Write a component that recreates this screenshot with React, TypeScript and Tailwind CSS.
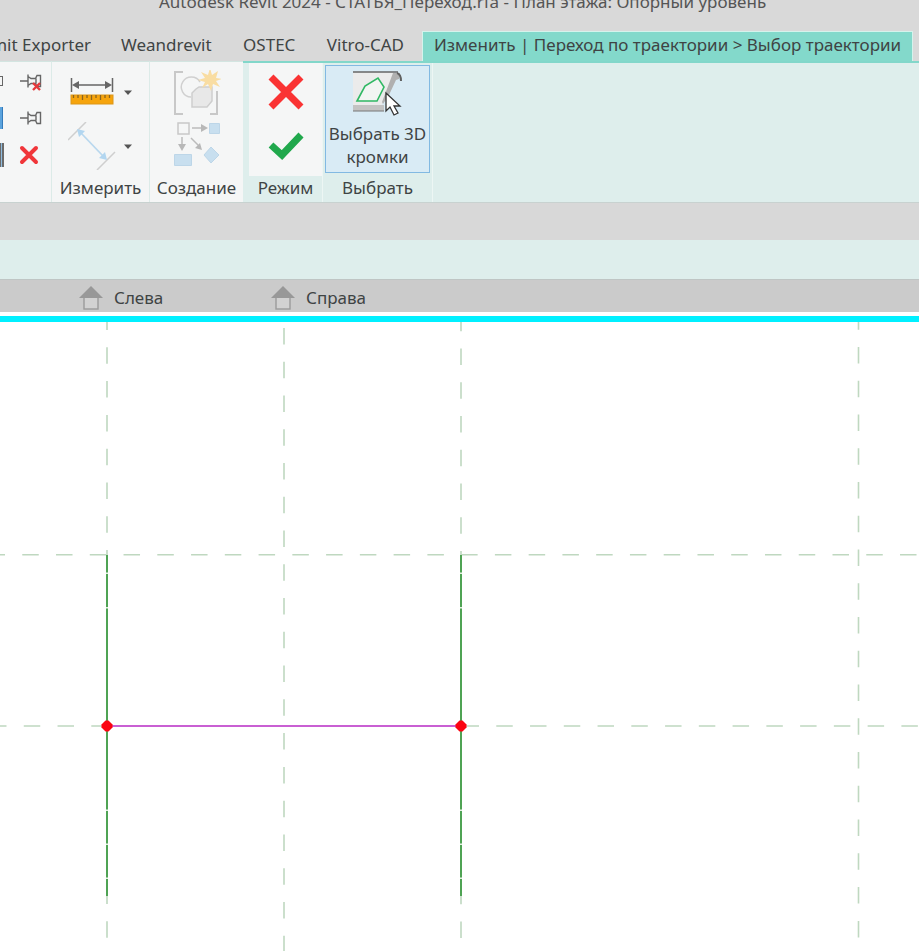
const TABS = ["Weandrevit", "OSTEC", "Vitro-CAD"];

// Reference planes: dashes repeat every 33.76 units
const PLANES = [
  { x1: 107, y1: 313.6, x2: 107, y2: 555 },
  { x1: 107, y1: 887.5, x2: 107, y2: 2000 },
  { x1: 284, y1: 328, x2: 284, y2: 2000 },
  { x1: 461, y1: 314.8, x2: 461, y2: 555 },
  { x1: 461, y1: 887.7, x2: 461, y2: 2000 },
  { x1: 858.5, y1: 313.2, x2: 858.5, y2: 2000 },
  { x1: -11.5, y1: 554.8, x2: 3000, y2: 554.8 },
  { x1: -10, y1: 726, x2: 107, y2: 726 },
  { x1: 462.5, y1: 726, x2: 3000, y2: 726 },
];

const PROFILE_X = [107, 461];
const PROFILE_BREAKS = [573, 607.5, 810, 844, 878];

function HouseIcon() {
  return (
    <svg width="24" height="24" viewBox="0 0 24 24" aria-hidden="true">
      <rect x="5" y="11" width="14" height="12" fill="#d2d2d2" stroke="#9b9b9b" strokeWidth="1.4" />
      <path d="M12 0 24 12H0Z" fill="#989898" />
    </svg>
  );
}

function PinIcon({ unpin = false }: { unpin?: boolean }) {
  return (
    <svg width="24" height="20" viewBox="0 0 24 20" fill="none" stroke="#666" strokeWidth="1.4" aria-hidden="true">
      <path d="M1 10h8M9 3.500v13M9 5.500l3 2h4.500l1.500-3h3.500v11H18l-1.500-3H12l-3 2M17 7.500v5" />
      {unpin && <path d="m14 12 7 7m0-7-7 7" stroke="#e5393c" strokeWidth="2.400" />}
    </svg>
  );
}

function DeleteIcon() {
  return (
    <svg width="20" height="20" viewBox="0 0 20 20" aria-hidden="true">
      <path d="m3 3 14 14m0-14L3 17" stroke="#f0363a" strokeWidth="4" strokeLinecap="round" />
    </svg>
  );
}

function MeasureIcon() {
  return (
    <svg width="44" height="28" viewBox="0 0 44 28" aria-hidden="true">
      <path d="M1.500 0v14M42.500 0v14M6 7h32" stroke="#666" strokeWidth="1.500" />
      <path d="M2 7l7-4v8zM42 7l-7-4v8z" fill="#666" />
      <rect x="1" y="17" width="42" height="9" fill="#f6a40c" stroke="#dc9618" />
      <path d="M3.500 17v3M8 17v3M12.500 17v5M17 17v3M21.500 17v5M26 17v3M30.500 17v5M35 17v3M39.500 17v3" stroke="#8a6420" strokeWidth="1.300" />
    </svg>
  );
}

function DimensionIcon() {
  return (
    <svg width="48" height="48" viewBox="0 0 48 48" aria-hidden="true">
      <path d="M0 18 18 0M29 48 47 30" stroke="#cfcfcf" strokeWidth="1.500" />
      <path d="m13 11 22 23" stroke="#b9d8ee" strokeWidth="1.800" />
      <path d="m9 7 8 2-6 6zM39 38l-8-2 6-6z" fill="#b2d6f0" />
    </svg>
  );
}

function GroupIcon() {
  return (
    <svg width="48" height="48" viewBox="0 0 48 48" fill="none" aria-hidden="true">
      <path d="M10 2H2v42h8M37 44h7V21" stroke="#c8c8c8" strokeWidth="2" />
      <path d="M18 27A10 10 0 1 1 27 12" stroke="#d0d0d0" strokeWidth="1.500" />
      <path d="m23 19 3-2h13v14l-5 6H19V23Z" fill="#e8e8e8" stroke="#cecece" strokeWidth="1.500" />
      <path d="m37-2 2 7 6-4-2 7 6 1-6 2 4 6-7-3-2 7-3-7-6 4 3-6-7-2 7-2-4-6 7 3z" fill="#f9dda2" />
    </svg>
  );
}

function CreateSimilarIcon() {
  return (
    <svg width="46" height="44" viewBox="0 0 46 44" fill="none" aria-hidden="true">
      <path d="M18 6h9M8 15v9M17 16l8 8" stroke="#bcbcbc" strokeWidth="1.500" />
      <path d="m27 2 7 4-7 4zM4 22h8l-4 7zM28 28l-2-7-5 5z" fill="#b8b8b8" />
      <rect x="4" y="1" width="11" height="11" stroke="#c8c8c8" strokeWidth="1.500" />
      <path d="M35.500 1.500h10v10h-10zM.500 32.500h17v11h-17zM37 25l8 8-8 8-7-8z" fill="#c8dfef" stroke="#bdd6e8" />
    </svg>
  );
}

function PickEdgesIcon() {
  return (
    <svg width="52" height="48" viewBox="0 0 52 48" aria-hidden="true">
      <path d="M1 2h41L30 35H1z" fill="#ebebeb" />
      <path d="M1 35h31v6H1z" fill="#c3c3c3" />
      <path d="M41 3h7l-1 6-3 1-7 15-6 9-1-2z" fill="#b0b0b0" />
      <path d="M1 2h45" stroke="#666" strokeWidth="1.500" />
      <path d="M45 3c3 1 4 4 4 8" fill="none" stroke="#606060" strokeWidth="2" />
      <path d="M1 41h31" stroke="#777" />
      <path d="m5 31 8-15 13-8 6 9-7 14z" fill="#f2f5f3" stroke="#31b864" strokeWidth="1.600" />
      <path d="M34 23v18l4-4 4 8 4-2-4-7h6z" fill="#fff" stroke="#333" strokeWidth="1.300" />
    </svg>
  );
}

function MenuArrow() {
  return (
    <svg width="8" height="5" viewBox="0 0 8 5" aria-hidden="true">
      <path d="M0 .5h8L4 5z" fill="#555" />
    </svg>
  );
}

function Ribbon() {
  return (
    <div className="flex h-[142px] border-b border-[#c8d2d0] bg-[#deeeec]">
      <div className="flex w-[52px] shrink-0 flex-col border-t border-r border-t-[#d3e5e1] border-r-[#dcebe8] bg-[#f5f6f6]">
        <div className="flex h-[38px] items-center justify-between pr-2">
          <span className="h-2.5 w-[3px] border border-l-0 border-[#666]" />
          <button type="button" aria-label="Открепить"><PinIcon unpin /></button>
        </div>
        <div className="flex h-9 items-center justify-between pr-2">
          <span className="h-[22px] w-[3px] border-r border-[#347bbc] bg-[#5ba3dd]" />
          <button type="button" aria-label="Закрепить"><PinIcon /></button>
        </div>
        <div className="flex h-[38px] items-center justify-between pr-3">
          <span className="h-6 w-1 border-r-2 border-l border-[#6b6b6b] bg-[#8ebce0]" />
          <button type="button" aria-label="Удалить"><DeleteIcon /></button>
        </div>
      </div>

      <section className="flex w-[98px] shrink-0 flex-col border-t border-r border-t-[#d3e5e1] border-r-[#dcebe8] bg-[#f5f6f6]">
        <div className="flex grow flex-col gap-4 pt-4 pl-4">
          <button type="button" aria-label="Измерить расстояние" className="flex items-center gap-2.5 pl-0.5">
            <MeasureIcon />
            <MenuArrow />
          </button>
          <button type="button" aria-label="Размер" className="flex items-center gap-2">
            <DimensionIcon />
            <MenuArrow />
          </button>
        </div>
        <h2 className="pb-0.5 text-center text-[17px] leading-6">Измерить</h2>
      </section>

      <section className="flex w-[93px] shrink-0 flex-col border-t border-[#d3e5e1] bg-[#f5f6f6]">
        <div className="flex grow flex-col items-center gap-1 pt-2">
          <button type="button" aria-label="Создать группу"><GroupIcon /></button>
          <button type="button" aria-label="Создать подобный"><CreateSimilarIcon /></button>
        </div>
        <h2 className="pb-0.5 text-center text-[17px] leading-6">Создание</h2>
      </section>

      <div className="flex grow border-t-2 border-[#82d7ca] pl-1.5">
        <section className="flex w-[74px] shrink-0 flex-col border-r border-[#edf6f4]">
          <div className="flex grow flex-col items-center gap-5 bg-[#f5f6f6] pt-2.5">
            <button type="button" aria-label="Отменить">
              <svg width="38" height="38" viewBox="0 0 38 38" aria-hidden="true">
                <path d="m4 4 30 30m0-30L4 34" stroke="#fa3333" strokeWidth="7" />
              </svg>
            </button>
            <button type="button" aria-label="Принять">
              <svg width="38" height="30" viewBox="0 0 38 30" aria-hidden="true">
                <path d="m4 14 11 10L34 4" fill="none" stroke="#20a84c" strokeWidth="7" />
              </svg>
            </button>
          </div>
          <h2 className="pb-0.5 text-center text-[17px] leading-6">Режим</h2>
        </section>

        <section className="flex w-[110px] shrink-0 flex-col border-r border-[#edf6f4] px-0.5 pt-0.5">
          <button
            type="button"
            className="flex h-[108px] flex-col items-center border border-[#82b9e2] bg-[#d9ebf5] pt-1 text-[17px] leading-[23px]"
          >
            <PickEdgesIcon />
            <span className="pt-1 whitespace-nowrap">Выбрать 3D</span>
            <span>кромки</span>
          </button>
          <h2 className="mt-auto pb-0.5 text-center text-[17px] leading-6">Выбрать</h2>
        </section>
      </div>
    </div>
  );
}

function DrawingArea() {
  return (
    <svg
      className="block h-[629px] w-full"
      viewBox="0 322 919 629"
      preserveAspectRatio="xMinYMin slice"
      role="img"
      aria-label="План этажа"
    >
      <g stroke="#bfd8c0" strokeWidth="1.600" strokeDasharray="16.500 17.260">
        {PLANES.map((p, i) => (
          <line key={i} {...p} />
        ))}
      </g>
      {PROFILE_X.map((x) => (
        <g key={x}>
          <line x1={x} y1="555" x2={x} y2="896" stroke="#4fa354" strokeWidth="2" />
          {PROFILE_BREAKS.map((y) => (
            <rect key={y} x={x - 1} y={y - 0.5} width="2" height="1.500" fill="#e6f2e4" />
          ))}
        </g>
      ))}
      <line x1="107" y1="726" x2="461" y2="726" stroke="#c95fd3" strokeWidth="2" />
      {PROFILE_X.map((x) => (
        <path key={x} d={`M${x - 1.5} 720.500h3l4 4v3l-4 4h-3l-4-4v-3z`} fill="#fb0411" />
      ))}
    </svg>
  );
}

export default function App() {
  return (
    <div className="overflow-hidden bg-white font-['Noto_Sans',sans-serif] text-[#3f4444]">
      <header className="bg-[#d9d9d9]">
        <div className="flex h-[31px] items-start overflow-hidden pl-[159px]">
          <h1 className="-mt-2.5 text-[17px] leading-6 whitespace-nowrap text-[#555]">
            Autodesk Revit 2024 - СТАТЬЯ_Переход.rfa - План этажа: Опорный уровень
          </h1>
        </div>
        <nav className="flex h-[30px] items-stretch text-[17px] leading-7 whitespace-nowrap">
          <button type="button" className="flex w-[91px] shrink-0 justify-end overflow-hidden">
            Summit Exporter
          </button>
          <div className="flex grow items-start justify-between pr-[18px] pl-[30px]">
            {TABS.map((tab) => (
              <button key={tab} type="button">{tab}</button>
            ))}
          </div>
          <button
            type="button"
            className="mr-1.5 w-[491px] shrink-0 border-t border-r border-l border-[#d5f3ec] bg-[#83d9cb] pb-1 text-center leading-6"
          >
            Изменить | Переход по траектории &gt; Выбор траектории
          </button>
        </nav>
      </header>
      <Ribbon />
      <div className="h-[37px] bg-[#d8d8d8]" />
      <div className="h-10 border-b border-[#bfc5c4] bg-[#deeeec]" />
      <nav className="flex h-8 items-center bg-[#cbcbcb] pt-1 pl-[79px] text-[17px] leading-6">
        <a href="#left" className="flex w-48 items-center gap-[11px]">
          <HouseIcon />
          Слева
        </a>
        <a href="#right" className="flex items-center gap-[11px]">
          <HouseIcon />
          Справа
        </a>
      </nav>
      <main className="border-t-4 border-white">
        <div className="h-1.5 bg-[#00f0ff]" />
        <DrawingArea />
      </main>
    </div>
  );
}
